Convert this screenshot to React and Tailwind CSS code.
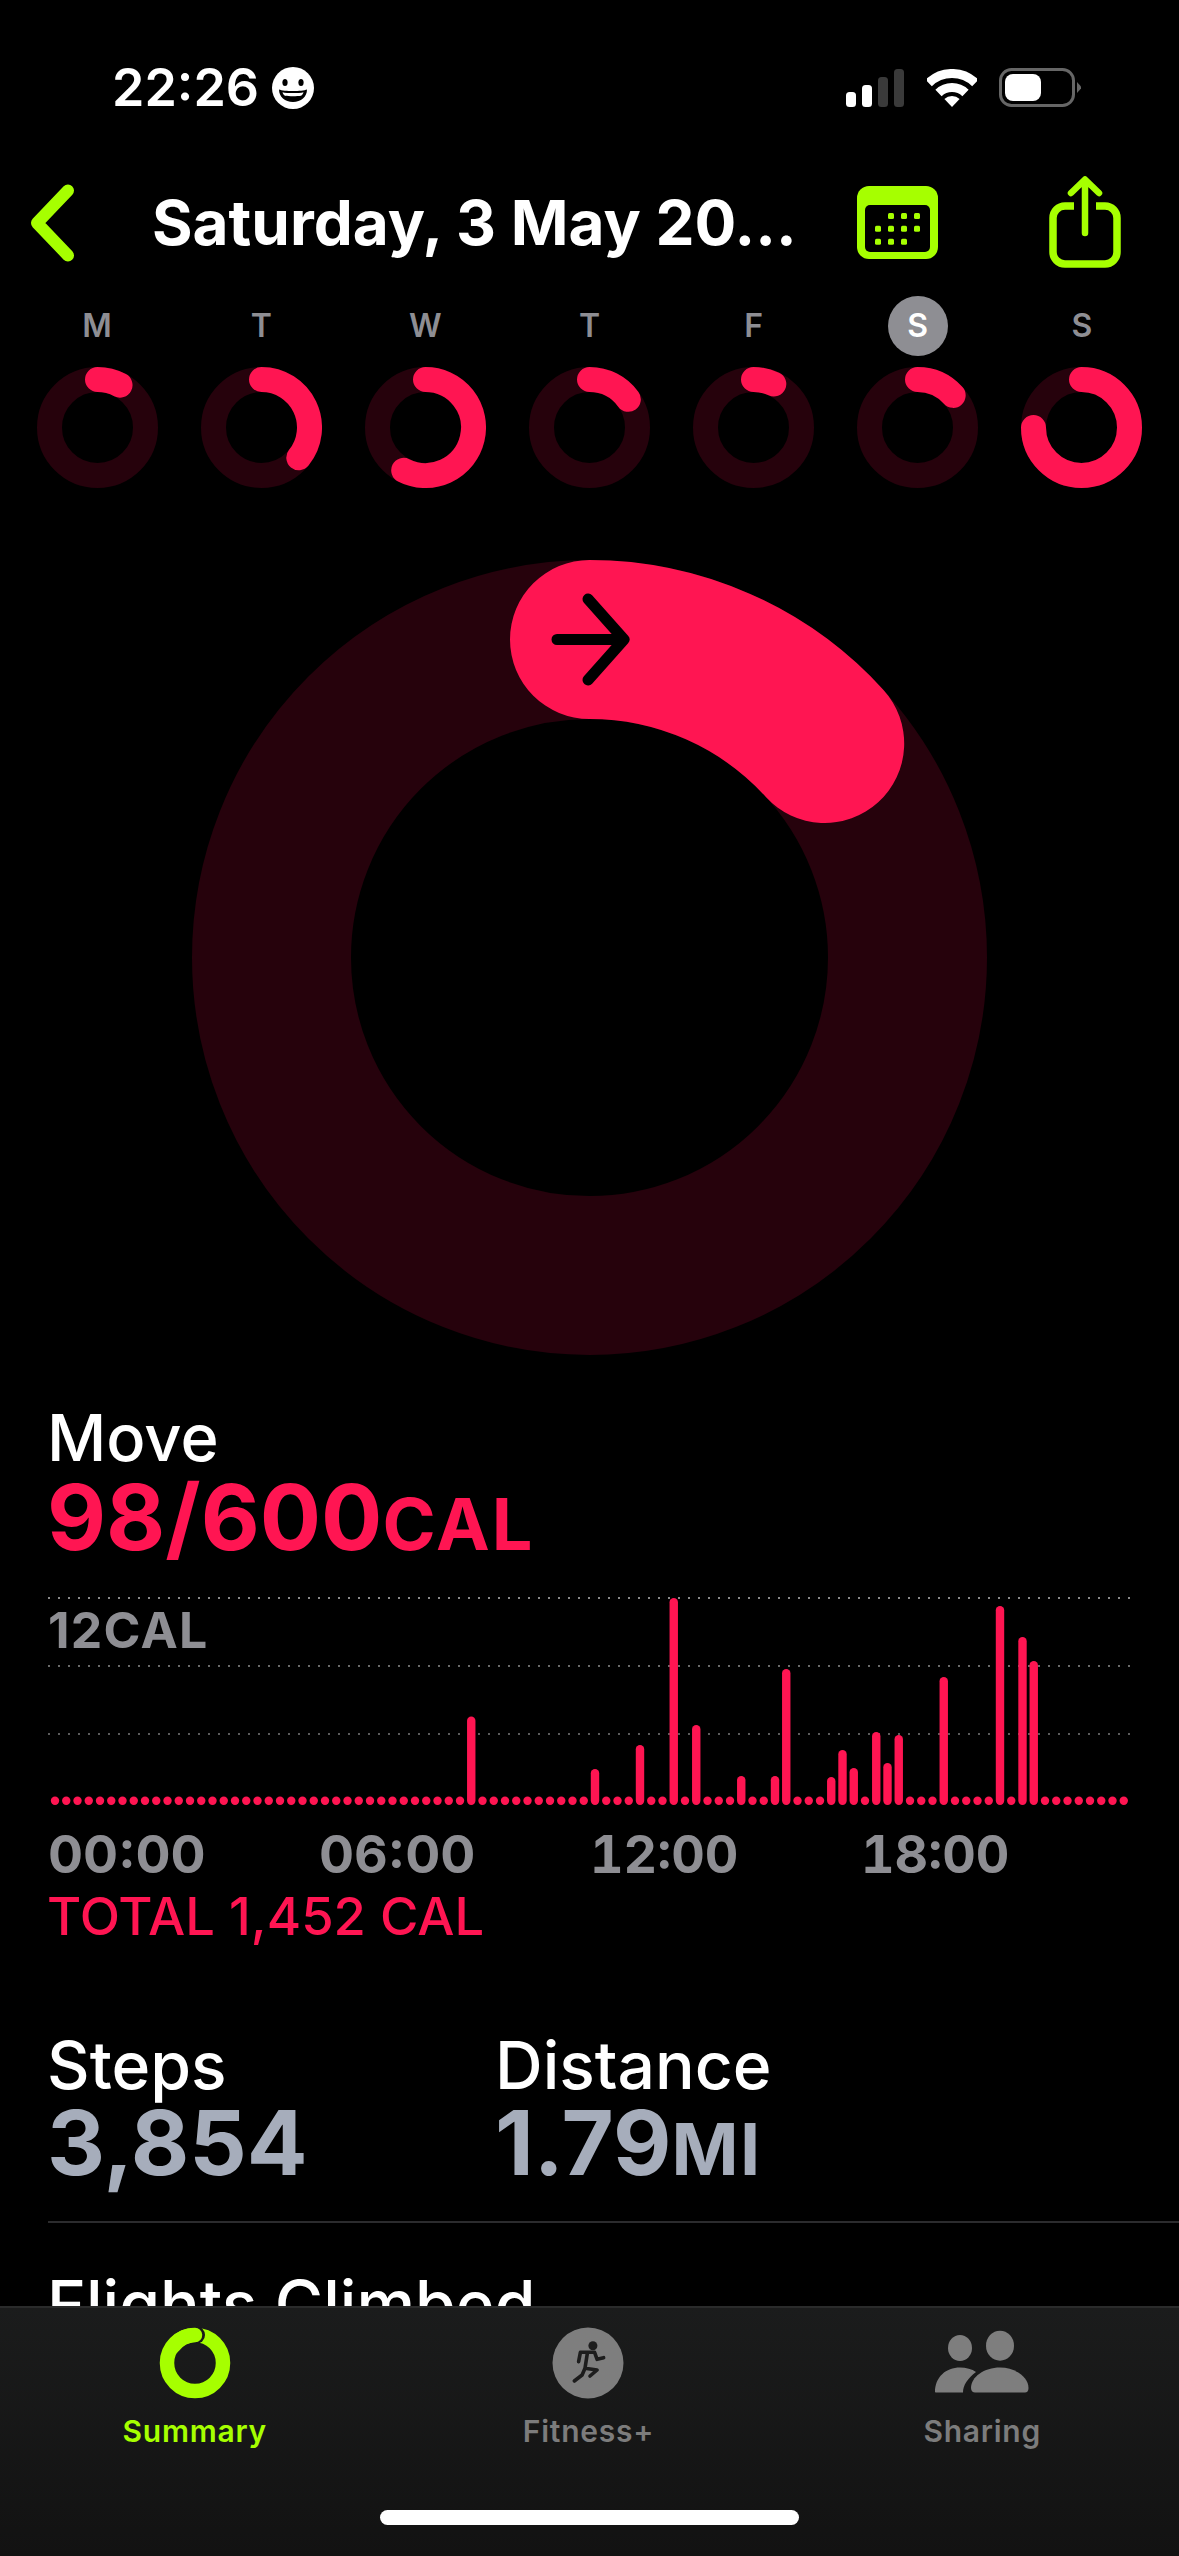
import React from "react";

const PINK = "#ff1552";
const TRACK = "#26020c";
const LIME = "#a6ff00";

function arcPath(cx, cy, r, deg) {
  const a = (deg * Math.PI) / 180;
  const x = cx + r * Math.sin(a);
  const y = cy - r * Math.cos(a);
  const large = deg > 180 ? 1 : 0;
  return `M${cx} ${cy - r}A${r} ${r} 0 ${large} 1 ${x.toFixed(2)} ${y.toFixed(2)}`;
}

function Smiley() {
  return (
    <svg width="42" height="42" viewBox="0 0 42 42" className="ml-[13px]">
      <circle cx="21" cy="21" r="21" fill="#fff" />
      <ellipse cx="13" cy="15.5" rx="2.6" ry="3.6" fill="#000" />
      <ellipse cx="29" cy="15.5" rx="2.6" ry="3.6" fill="#000" />
      <path d="M7 22.5C12 24.5 30 24.5 35 22.5C35 30 29 35 21 35C13 35 7 30 7 22.5Z" fill="#000" />
      <path d="M10.5 25.2C15 26.4 27 26.4 31.5 25.2C31 27 30 28 29 28.7C25 29.3 17 29.3 13 28.7C12 28 11 27 10.5 25.2Z" fill="#fff" />
    </svg>
  );
}

function StatusIcons() {
  return (
    <div className="flex items-center">
      <svg width="58" height="38" viewBox="0 0 58 38">
        <rect x="0" y="23" width="10" height="15" rx="3.5" fill="#fff" />
        <rect x="16" y="16" width="10" height="22" rx="3.5" fill="#fff" />
        <rect x="32" y="8" width="10" height="30" rx="3.5" fill="#3a3a3a" />
        <rect x="48" y="0" width="10" height="38" rx="3.5" fill="#3a3a3a" />
      </svg>
      <svg width="50" height="38" viewBox="0 0 50 38" className="ml-[23px]" fill="none">
        <path d="M1.7 13.9A33.5 33.5 0 0 1 48.3 13.9" stroke="#fff" strokeWidth="9" />
        <path d="M11.5 24A19.5 19.5 0 0 1 38.5 24" stroke="#fff" strokeWidth="9" />
        <path d="M25 38L17.4 30.1A11 11 0 0 1 32.6 30.1Z" fill="#fff" />
      </svg>
      <svg width="82" height="40" viewBox="0 0 82 40" className="ml-[22px]">
        <rect x="1.5" y="1.5" width="73" height="36" rx="11" fill="none" stroke="#666" strokeWidth="3" />
        <rect x="6" y="6" width="36" height="27" rx="8" fill="#fff" />
        <path d="M78 14L82 18.5V20.5L78 25Z" fill="#666" />
      </svg>
    </div>
  );
}

function Chevron() {
  return (
    <svg width="50" height="80" viewBox="0 0 50 80" fill="none">
      <path d="M39 7.5L8 40L39 72.5" stroke={LIME} strokeWidth="12" strokeLinecap="round" strokeLinejoin="round" />
    </svg>
  );
}

function CalendarIcon() {
  const rows = [
    [0, 1, 1, 1],
    [1, 1, 1, 1],
    [1, 1, 1, 0],
  ];
  const xs = [21, 34, 47, 60];
  const ys = [30, 42.7, 55.7];
  return (
    <svg width="81" height="73" viewBox="0 0 81 73">
      <rect x="0" y="0" width="81" height="73" rx="12" fill={LIME} />
      <rect x="8" y="19" width="65" height="47" rx="5" fill="#000" />
      {rows.map((row, r) =>
        row.map((on, c) =>
          on ? <rect key={`${r}-${c}`} x={xs[c] - 3} y={ys[r] - 3} width="6" height="6" rx="1.5" fill={LIME} /> : null
        )
      )}
    </svg>
  );
}

function ShareIcon() {
  return (
    <svg width="72" height="92" viewBox="0 0 72 92" fill="none" stroke={LIME} strokeLinecap="round" strokeLinejoin="round">
      <path d="M25 30H16A12 12 0 0 0 4 42V76A12 12 0 0 0 16 88H56A12 12 0 0 0 68 76V42A12 12 0 0 0 56 30H47" strokeWidth="7.5" strokeLinecap="butt" />
      <path d="M36 57V4M22 17L36 3.5L50 17" strokeWidth="6.5" />
    </svg>
  );
}

function SmallRing({ deg }) {
  return (
    <svg width="121" height="121" viewBox="0 0 121 121" fill="none" className="block">
      <circle cx="60.5" cy="60.5" r="48" stroke={TRACK} strokeWidth="25" />
      <path d={arcPath(60.5, 60.5, 48, deg)} stroke={PINK} strokeWidth="25" strokeLinecap="round" />
    </svg>
  );
}

const DAYS = [
  ["M", 28],
  ["T", 129],
  ["W", 207],
  ["T", 54],
  ["F", 25],
  ["S", 48, true],
  ["S", 270],
];

function WeekRow() {
  return (
    <div className="grid grid-cols-7 px-[15px] mt-[26px]">
      {DAYS.map(([l, d, active], i) => (
        <div key={i} className="flex flex-col items-center">
          <div
            className={
              active
                ? "w-[60px] h-[60px] rounded-full bg-[#8e8e93] text-white flex items-center justify-center text-[32px] font-semibold"
                : "w-[60px] h-[60px] rounded-full text-[#8e8e93] flex items-center justify-center text-[32px] font-semibold"
            }
          >
            {l}
          </div>
          <div className="mt-[11px]">
            <SmallRing deg={d} />
          </div>
        </div>
      ))}
    </div>
  );
}

function BigRing() {
  return (
    <div className="flex justify-center mt-[72px]">
      <svg width="795" height="795" viewBox="0 0 795 795" fill="none" className="block">
        <circle cx="397.5" cy="397.5" r="318" stroke={TRACK} strokeWidth="159" />
        <path d={arcPath(397.5, 397.5, 318, 47.7)} stroke={PINK} strokeWidth="159" strokeLinecap="round" />
        <path
          d="M365 79.5H430M396 39L432 79.5L396 120"
          stroke="#000"
          strokeWidth="11"
          strokeLinecap="round"
          strokeLinejoin="round"
        />
      </svg>
    </div>
  );
}

const BAR_TOPS = {
  37: 1716.5,
  48: 1769,
  52: 1745,
  55: 1598,
  57: 1725,
  61: 1776,
  64: 1776,
  65: 1669,
  69: 1777,
  70: 1750,
  71: 1768,
  73: 1732,
  74: 1763,
  75: 1735,
  79: 1677,
  84: 1606,
  86: 1637,
  87: 1661,
};

function Chart() {
  const base = 1805 - 1590;
  return (
    <div className="relative mt-[21px] ml-[1px]">
      <svg width="1100" height="220" viewBox="0 0 1100 220" className="block">
        {[
          [8, "#8a8a8a"],
          [76, "#6a6a6a"],
          [144, "#5c5c5c"],
        ].map(([y, c]) => (
          <line key={y} x1="0" x2="1083" y1={y} y2={y} stroke={c} strokeWidth="2" strokeDasharray="2 8" />
        ))}
        {Array.from({ length: 96 }).map((_, i) => {
          const x = 55 - 48 + 11.25 * i - 4.2;
          const top = BAR_TOPS[i] ? BAR_TOPS[i] - 1590 : base - 8.4;
          return <rect key={i} x={x} y={top} width="8.4" height={base - top} rx="4.2" fill={PINK} />;
        })}
      </svg>
      <div className="absolute left-0 top-[16px] text-[50px] leading-[48px] tracking-[0.025em] font-bold text-[#8e8e93]">12CAL</div>
    </div>
  );
}

function RingTab() {
  return (
    <svg width="72" height="72" viewBox="0 0 72 72" fill="none" className="block">
      <circle cx="36" cy="36" r="28" stroke={LIME} strokeWidth="14.5" />
      <circle cx="37" cy="8" r="9" fill="#191a1a" />
      <path d="M14.5 19.3A28 28 0 0 1 36 8" stroke={LIME} strokeWidth="14.5" strokeLinecap="round" />
    </svg>
  );
}

function RunTab() {
  return (
    <svg width="72" height="72" viewBox="0 0 72 72" fill="none" className="block">
      <circle cx="36" cy="36" r="35.5" fill="#7e7e7e" />
      <circle cx="40.9" cy="18.7" r="4.5" fill="#1d1d1d" />
      <path
        d="M26.6 34.7L28.4 25.3H42.6L45.1 32.3L51.6 30.7M35.5 25.3L33 41.3L45.1 43L38 49M33 41.3L30.1 48L22.3 54"
        stroke="#1d1d1d"
        strokeWidth="3.6"
        strokeLinecap="round"
        strokeLinejoin="round"
      />
    </svg>
  );
}

function ShareTab() {
  return (
    <svg width="100" height="72" viewBox="0 0 100 72" className="block -translate-x-[2px]">
      <ellipse cx="30" cy="21" rx="12" ry="13" fill="#7e7e7e" />
      <ellipse cx="70" cy="18.7" rx="14" ry="15" fill="#7e7e7e" />
      <path d="M5 65C5 50 16 40.5 30 40.5C36 40.5 42 42 46 45C38 51 33 58 33 65.5H8C6 65.5 5 65.5 5 65Z" fill="#7e7e7e" />
      <path d="M41 61C41 50 54 40.5 70 40.5C85 40.5 98.5 50 98.5 61C98.5 64 97 65.5 95 65.5H45C43 65.5 41 64 41 61Z" fill="#7e7e7e" />
    </svg>
  );
}

function Tab({ icon, label, color }) {
  return (
    <div className="flex flex-col items-center">
      <div className="h-[72px] flex items-center justify-center">{icon}</div>
      <div className="mt-[14px] text-[30px] leading-[36px] tracking-[0.025em] font-semibold" style={{ color }}>
        {label}
      </div>
    </div>
  );
}

export default function App() {
  return (
    <div className="w-[1179px] h-[2556px] bg-black text-white flex flex-col overflow-hidden [font-family:Inter,sans-serif]">
      <div className="flex-1 min-h-0 overflow-hidden">
        <div className="h-[175px] flex items-center justify-between pl-[112px] pr-[98px]">
          <div className="flex items-center">
            <span className="text-[52px] leading-[48px] font-semibold">22:26</span>
            <Smiley />
          </div>
          <StatusIcons />
        </div>
        <div className="h-[95px] flex items-center pl-[29px]">
          <Chevron />
          <div className="ml-[73px] w-[660px] text-[62px] leading-[70px] font-bold whitespace-nowrap">Saturday, 3 May 20...</div>
          <div className="ml-[45px]">
            <CalendarIcon />
          </div>
          <div className="ml-[111px] -mt-[2px]">
            <ShareIcon />
          </div>
        </div>
        <WeekRow />
        <BigRing />
        <div className="pl-[47px] mt-[51px]">
          <div className="text-[65px] leading-[64px] font-medium">Move</div>
          <div className="mt-[2px] text-[91px] leading-[91px] font-bold text-[#ff1552]">
            98/600<span className="text-[72px] tracking-[0.03em]">CAL</span>
          </div>
          <Chart />
          <div className="grid grid-cols-[271px_271px_271px_271px] mt-[18px] pl-[1px] text-[52px] leading-[54px] font-bold text-[#8e8e93]">
            <div>00:00</div>
            <div>06:00</div>
            <div className="tabular-nums">12:00</div>
            <div className="tabular-nums">18:00</div>
          </div>
          <div className="mt-[6px] text-[52.5px] leading-[56px] font-medium text-[#ff1552]">TOTAL 1,452 CAL</div>
          <div className="flex mt-[88px]">
            <div className="w-[448px]">
              <div className="text-[66px] leading-[66px] font-medium">Steps</div>
              <div className="text-[90px] leading-[90px] font-bold text-[#a6adbb]">3,854</div>
            </div>
            <div>
              <div className="text-[66px] leading-[66px] font-medium">Distance</div>
              <div className="text-[90px] leading-[90px] font-bold text-[#a6adbb]">
                1.79<span className="text-[72px] tracking-[0.02em]">MI</span>
              </div>
            </div>
          </div>
        </div>
        <div className="ml-[48px] mt-[27px] h-[2px] bg-[#2c2c2e]" />
        <div className="pl-[47px] mt-[48px] text-[66px] leading-[66px] font-medium">Flights Climbed</div>
      </div>
      <div className="h-[250px] shrink-0 border-t-2 border-[#2a2b2b] bg-gradient-to-b from-[#1b1c1c] to-[#121212] pt-[19px]">
        <div className="grid grid-cols-3 -ml-[2px]">
          <Tab icon={<RingTab />} label="Summary" color={LIME} />
          <Tab icon={<RunTab />} label="Fitness+" color="#7c7c7c" />
          <Tab icon={<ShareTab />} label="Sharing" color="#7c7c7c" />
        </div>
        <div className="mx-auto mt-[61px] w-[419px] h-[15px] rounded-full bg-white" />
      </div>
    </div>
  );
}
